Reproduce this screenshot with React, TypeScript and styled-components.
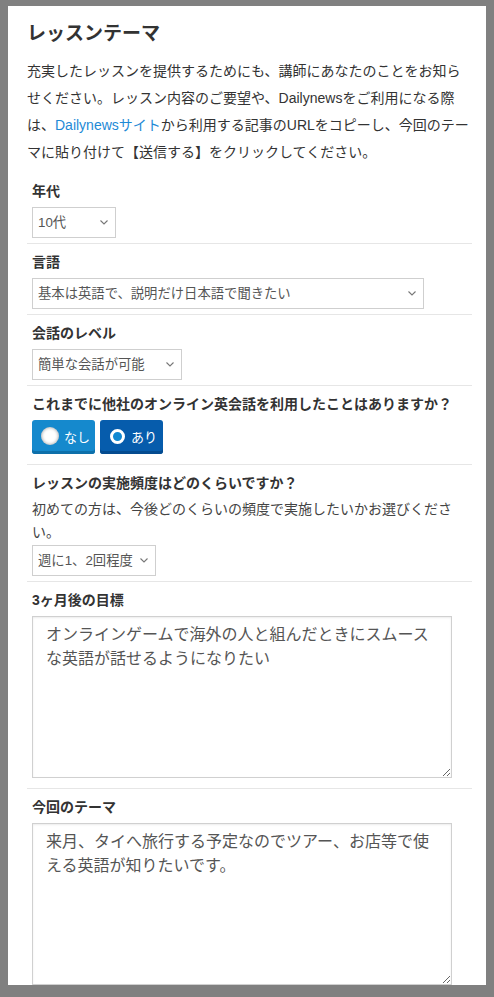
import React from "react";
import styled, { createGlobalStyle } from "styled-components";

const Global = createGlobalStyle`
  html, body { margin: 0; padding: 0; background: #808080; }
  body { font-family: "Liberation Sans", "Noto Sans CJK JP", sans-serif; color: #333; }
  * { box-sizing: border-box; }
`;

const Page = styled.div`
  padding: 6px 8px 7px;
`;

const Panel = styled.div`
  background: #fff;
  padding: 10px 14px 0 19px;
`;

const Title = styled.h2`
  margin: 0;
  font-size: 19px;
  line-height: 36px;
  font-weight: bold;
  color: #333;
`;

const Intro = styled.p`
  margin: 6px 0 7px;
  font-size: 14px;
  line-height: 27px;
  color: #333;
`;

const Link = styled.a`
  color: #1e8ad6;
  text-decoration: none;
`;

const Group = styled.div<{ $last?: boolean }>`
  padding: ${(p) => (p.$last ? "8px 5px 0" : "8px 5px 5px")};
  border-bottom: ${(p) => (p.$last ? "none" : "1px solid #e6e6e6")};
`;

const Label = styled.div`
  font-size: 14px;
  line-height: 20px;
  font-weight: bold;
  color: #333;
  margin-bottom: 6px;
`;

const Desc = styled.div`
  font-size: 14px;
  line-height: 23px;
  color: #444;
  margin-top: -1px;
  margin-bottom: 1px;
`;

const SelectWrap = styled.div<{ $w: number }>`
  position: relative;
  width: ${(p) => p.$w}px;
  height: 31px;
`;

const Select = styled.select`
  appearance: none;
  -webkit-appearance: none;
  width: 100%;
  height: 100%;
  border: 1px solid #cfcfcf;
  border-radius: 0;
  background: #fff;
  padding: 0 20px 0 5px;
  font-family: "Liberation Sans", "Noto Sans CJK JP", sans-serif;
  font-size: 13.333px;
  color: #555;
  outline: none;
`;

const Chevron = styled.svg`
  position: absolute;
  right: 8px;
  top: 13px;
  width: 8px;
  height: 5px;
  pointer-events: none;
`;

const Buttons = styled.div`
  display: flex;
  gap: 5px;
  margin-bottom: 5px;
`;

const RadioBtn = styled.label<{ $on?: boolean }>`
  display: flex;
  align-items: center;
  gap: 5px;
  width: 63px;
  height: 34px;
  padding-left: 9px;
  border-radius: 3px;
  background: ${(p) => (p.$on ? "#065cac" : "#1589cd")};
  box-shadow: inset 0 -3px 0 ${(p) => (p.$on ? "#044b8f" : "#0e70aa")};
  color: #fff;
  font-size: 13px;
  cursor: pointer;
`;

const Dot = styled.span<{ $on?: boolean }>`
  display: block;
  width: ${(p) => (p.$on ? 15 : 18)}px;
  height: ${(p) => (p.$on ? 15 : 18)}px;
  margin: ${(p) => (p.$on ? "0 1px 2px 1px" : "0 0 2px 0")};
  border-radius: 50%;
  background: ${(p) => (p.$on ? "#1088d2" : "#fff")};
  border: ${(p) => (p.$on ? "3px solid #fff" : "none")};
  box-shadow: ${(p) => (p.$on ? "none" : "inset 0 0 3px 1px rgba(0,0,0,0.28)")};
`;

const BtnText = styled.span`
  margin-bottom: 2px;
`;

const TextArea = styled.textarea`
  display: block;
  width: 420px;
  height: 162px;
  margin-bottom: 5px;
  padding: 6px 13px;
  border: 1px solid #d0d0d0;
  box-shadow: inset 0 1px 2px rgba(0, 0, 0, 0.08);
  font-family: "Liberation Sans", "Noto Sans CJK JP", sans-serif;
  font-size: 16px;
  line-height: 24px;
  color: #555;
  outline: none;
`;

const Dropdown: React.FC<{ w: number; value: string; options: string[] }> = ({ w, value, options }) => (
  <SelectWrap $w={w}>
    <Select defaultValue={value}>
      {options.map((o) => (
        <option key={o}>{o}</option>
      ))}
    </Select>
    <Chevron viewBox="0 0 8 5">
      <path d="M0.5 0.5 L4 4 L7.5 0.5" fill="none" stroke="#777" strokeWidth="1.1" />
    </Chevron>
  </SelectWrap>
);

export default function App() {
  return (
    <>
      <Global />
      <Page>
        <Panel>
          <Title>レッスンテーマ</Title>
          <Intro>
            充実したレッスンを提供するためにも、講師にあなたのことをお知らせください。レッスン内容のご要望や、Dailynewsをご利用になる際は、
            <Link href="#">Dailynewsサイト</Link>
            から利用する記事のURLをコピーし、今回のテーマに貼り付けて【送信する】をクリックしてください。
          </Intro>

          <Group>
            <Label>年代</Label>
            <Dropdown w={84} value="10代" options={["10代", "20代", "30代", "40代", "50代", "60代以上"]} />
          </Group>

          <Group>
            <Label>言語</Label>
            <Dropdown
              w={392}
              value="基本は英語で、説明だけ日本語で聞きたい"
              options={["基本は英語で、説明だけ日本語で聞きたい", "すべて英語で聞きたい"]}
            />
          </Group>

          <Group>
            <Label>会話のレベル</Label>
            <Dropdown w={150} value="簡単な会話が可能" options={["簡単な会話が可能", "日常会話が可能"]} />
          </Group>

          <Group>
            <Label>これまでに他社のオンライン英会話を利用したことはありますか？</Label>
            <Buttons>
              <RadioBtn>
                <Dot />
                <BtnText>なし</BtnText>
              </RadioBtn>
              <RadioBtn $on>
                <Dot $on />
                <BtnText>あり</BtnText>
              </RadioBtn>
            </Buttons>
          </Group>

          <Group>
            <Label>レッスンの実施頻度はどのくらいですか？</Label>
            <Desc>初めての方は、今後どのくらいの頻度で実施したいかお選びください。</Desc>
            <Dropdown w={124} value="週に1、2回程度" options={["週に1、2回程度", "週に3、4回程度", "毎日"]} />
          </Group>

          <Group>
            <Label>3ヶ月後の目標</Label>
            <TextArea defaultValue="オンラインゲームで海外の人と組んだときにスムースな英語が話せるようになりたい" />
          </Group>

          <Group $last>
            <Label>今回のテーマ</Label>
            <TextArea defaultValue="来月、タイへ旅行する予定なのでツアー、お店等で使える英語が知りたいです。" />
          </Group>
        </Panel>
      </Page>
    </>
  );
}
